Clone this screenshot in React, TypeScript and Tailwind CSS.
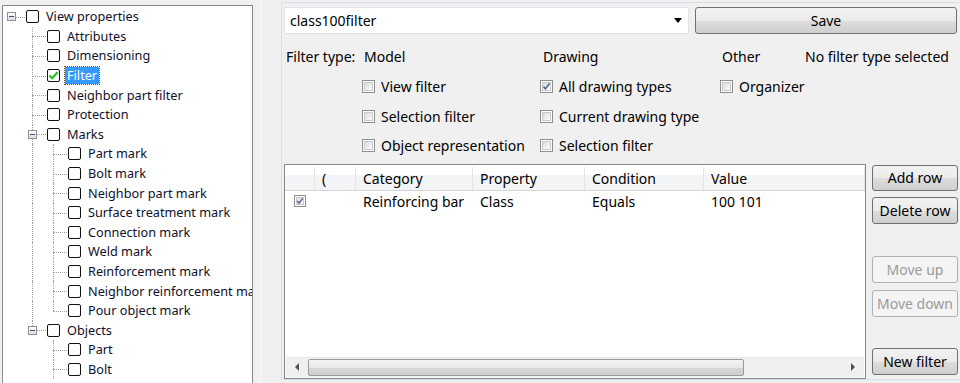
import React from 'react';

type Node = {
    label: string;
    level: number;
    expander?: boolean;
    checked?: boolean;
    selected?: boolean;
    // cells[i] -> what to draw in indent cell i: 'none' | 'pipe' | 'tee' | 'ell' | 'root'
    cells: string[];
};

const treeRows: Node[] = [
    { label: 'View properties', level: 0, expander: true, cells: ['root'] },
    { label: 'Attributes', level: 1, cells: ['none', 'tee'] },
    { label: 'Dimensioning', level: 1, cells: ['none', 'tee'] },
    { label: 'Filter', level: 1, checked: true, selected: true, cells: ['none', 'tee'] },
    { label: 'Neighbor part filter', level: 1, cells: ['none', 'tee'] },
    { label: 'Protection', level: 1, cells: ['none', 'tee'] },
    { label: 'Marks', level: 1, expander: true, cells: ['none', 'tee'] },
    { label: 'Part mark', level: 2, cells: ['none', 'pipe', 'tee'] },
    { label: 'Bolt mark', level: 2, cells: ['none', 'pipe', 'tee'] },
    { label: 'Neighbor part mark', level: 2, cells: ['none', 'pipe', 'tee'] },
    { label: 'Surface treatment mark', level: 2, cells: ['none', 'pipe', 'tee'] },
    { label: 'Connection mark', level: 2, cells: ['none', 'pipe', 'tee'] },
    { label: 'Weld mark', level: 2, cells: ['none', 'pipe', 'tee'] },
    { label: 'Reinforcement mark', level: 2, cells: ['none', 'pipe', 'tee'] },
    { label: 'Neighbor reinforcement mark', level: 2, cells: ['none', 'pipe', 'tee'] },
    { label: 'Pour object mark', level: 2, cells: ['none', 'pipe', 'ell'] },
    { label: 'Objects', level: 1, expander: true, cells: ['none', 'ell'] },
    { label: 'Part', level: 2, cells: ['none', 'none', 'tee'] },
    { label: 'Bolt', level: 2, cells: ['none', 'none', 'tee'] },
];

function Expander() {
    return (
        <div className="relative z-10 w-[9px] h-[9px] border border-[#919191] bg-gradient-to-b from-white to-[#dcdcdc] flex items-center justify-center">
            <div className="w-[5px] h-[1px] bg-[#3b4f7a]" />
        </div>
    );
}

function IndentCell({ kind, first, expander }: { kind: string; first: boolean; expander: boolean }) {
    const w = first ? 'w-[19px]' : 'w-[21px]';
    const lineX = first ? 'left-[8px]' : 'left-[10px]';
    const expX = first ? 'left-[4px]' : 'left-[6px]';
    return (
        <div className={`relative h-full shrink-0 ${w}`}>
            {(kind === 'pipe' || kind === 'tee') && (
                <div className={`absolute top-0 bottom-0 ${lineX} border-l border-dotted border-[#a0a0a0]`} />
            )}
            {kind === 'ell' && (
                <div className={`absolute top-0 h-1/2 ${lineX} border-l border-dotted border-[#a0a0a0]`} />
            )}
            {(kind === 'tee' || kind === 'ell' || kind === 'root') && (
                <div className={`absolute top-1/2 right-[-3px] ${lineX} border-t border-dotted border-[#a0a0a0]`} />
            )}
            {expander && (
                <div className={`absolute top-[5px] ${expX}`}>
                    <Expander />
                </div>
            )}
        </div>
    );
}

function TreeCheck({ checked }: { checked?: boolean }) {
    return (
        <div className="relative z-10 ml-[4px] w-[13px] h-[13px] shrink-0 border-[1.5px] border-[#111] rounded-[2px] bg-white">
            {checked && (
                <svg viewBox="0 0 12 12" className="absolute inset-0 w-full h-full">
                    <polyline points="1.5,6 4.5,9 10.5,2.5" fill="none" stroke="#1fc51f" strokeWidth="2.4" />
                </svg>
            )}
        </div>
    );
}

function Tree() {
    return (
        <div className="ml-[2px] mt-[5px] w-[251px] h-[400px] shrink-0 overflow-hidden bg-white border border-[#828790] text-[12.7px]">
            {treeRows.map((r, i) => (
                <div key={i} className={`flex items-center h-[19.6px] whitespace-nowrap ${i === 0 ? 'mt-[1px]' : ''}`}>
                    {r.cells.map((c, j) => (
                        <IndentCell key={j} kind={c} first={j === 0} expander={!!r.expander && j === r.level} />
                    ))}
                    <TreeCheck checked={r.checked} />
                    <span
                        className={`ml-[5px] px-[2px] leading-[17px] text-[#10102a] ${
                            r.selected ? 'bg-[#3399ff] text-white outline outline-1 outline-dotted outline-[#7a4a20]' : ''
                        }`}
                    >
                        {r.label}
                    </span>
                </div>
            ))}
        </div>
    );
}

function Check({ checked, small }: { checked?: boolean; small?: boolean }) {
    const size = small ? 'w-[12px] h-[12px]' : 'w-[13px] h-[13px]';
    return (
        <div className={`relative shrink-0 ${size} border border-[#8e8f8f] bg-white p-[1px]`}>
            <div className="w-full h-full border border-[#c9c9c9] bg-gradient-to-br from-[#dcdcdc] to-[#fbfbfb]" />
            {checked && (
                <svg viewBox="0 0 13 13" className="absolute inset-0 w-full h-full">
                    <polyline points="3,6.5 5.3,9.3 10,3" fill="none" stroke="#4a5f97" strokeWidth="1.8" />
                </svg>
            )}
        </div>
    );
}

function Opt({ label, checked }: { label: string; checked?: boolean }) {
    return (
        <div className="flex items-center h-[29.5px]">
            <Check checked={checked} />
            <span className="ml-[6px]">{label}</span>
        </div>
    );
}

function Btn({ label, disabled, className = '' }: { label: string; disabled?: boolean; className?: string }) {
    return (
        <div
            className={`flex items-center justify-center rounded-[3px] border ${
                disabled
                    ? 'border-[#adb2b5] bg-[#f4f4f4] text-[#9a9a9a]'
                    : 'border-[#707070] bg-[linear-gradient(#f2f2f2_0%,#ebebeb_50%,#dddddd_51%,#cfcfcf_100%)] text-black'
            } ${className}`}
        >
            {label}
        </div>
    );
}

function FilterTable() {
    const cols = ['w-[30px] pl-[9px]', 'w-[41px] pl-[7px]', 'w-[117px] pl-[7px]', 'w-[112px] pl-[7px]', 'w-[119px] pl-[7px]', 'flex-1 pl-[7px]'];
    const head = ['', '(', 'Category', 'Property', 'Condition', 'Value'];
    const row = ['', '', 'Reinforcing bar', 'Class', 'Equals', '100 101'];
    return (
        <div className="w-[582px] h-[215px] border border-[#828790] bg-white flex flex-col">
            <div className="flex h-[26px] pt-[2px] border-b border-[#d5d5d5] bg-[linear-gradient(#ffffff_0%,#ffffff_40%,#f3f4f5_41%,#f3f4f5_100%)]">
                {head.map((h, i) => (
                    <div key={i} className={`${cols[i]} shrink-0 flex items-center border-r border-[#e3e4e6]`}>
                        {h}
                    </div>
                ))}
            </div>
            <div className="flex h-[21px]">
                {row.map((c, i) => (
                    <div key={i} className={`${cols[i]} shrink-0 flex items-center`}>
                        {i === 0 ? <Check checked small /> : c}
                    </div>
                ))}
            </div>
            <div className="flex-1" />
            <div className="flex h-[20px] mx-[1px] mb-[1px] bg-[#f0f0f0] border-t border-[#e6e6e6] items-center">
                <div className="w-[22px] flex justify-center">
                    <div className="w-0 h-0 border-y-[4px] border-y-transparent border-r-[4px] border-r-[#505050]" />
                </div>
                <div className="w-[436px] h-[17px] rounded-[2px] border border-[#9a9a9a] bg-[linear-gradient(#f3f3f3_0%,#e8e8e8_50%,#d6d6d6_51%,#cfcfcf_100%)]" />
                <div className="flex-1" />
                <div className="w-[22px] flex justify-center">
                    <div className="w-0 h-0 border-y-[4px] border-y-transparent border-l-[4px] border-l-[#505050]" />
                </div>
            </div>
        </div>
    );
}

export default function App() {
    return (
        <div
            className="w-[960px] h-[383px] overflow-hidden bg-[#f0f0f0] flex text-[14px] text-black"
            style={{ fontFamily: '"Noto Sans", "Open Sans", sans-serif' }}
        >
            <Tree />
            <div className="w-[7px] shrink-0" />
            <div className="w-[1px] shrink-0 bg-[#fbfbfb]" />
            <div className="w-[20px] shrink-0" />
            <div className="flex-1 mt-[2px] h-[378px] border-l border-b border-t border-[#d5dfe5] pl-[2px] pt-[4px]">
                <div className="flex items-center gap-[6px]">
                    <div className="w-[405px] h-[27px] bg-white border border-[#e0e3e8] flex items-center pl-[5px] pr-[6px]">
                        <span className="flex-1">class100filter</span>
                        <div className="w-0 h-0 border-x-[4px] border-x-transparent border-t-[5px] border-t-black" />
                    </div>
                    <Btn label="Save" className="w-[262px] h-[27px]" />
                </div>
                <div className="flex mt-[12px] ml-[2px]">
                    <div className="w-[76px] h-[20px] flex items-center">Filter type:</div>
                    <div className="w-[178px]">
                        <div className="h-[20px] flex items-center pl-[2px]">Model</div>
                        <div className="mt-[6px]">
                            <Opt label="View filter" />
                            <Opt label="Selection filter" />
                            <Opt label="Object representation" />
                        </div>
                    </div>
                    <div className="w-[180px]">
                        <div className="h-[20px] flex items-center pl-[3px]">Drawing</div>
                        <div className="mt-[6px]">
                            <Opt label="All drawing types" checked />
                            <Opt label="Current drawing type" />
                            <Opt label="Selection filter" />
                        </div>
                    </div>
                    <div className="w-[85px]">
                        <div className="h-[20px] flex items-center pl-[2px]">Other</div>
                        <div className="mt-[6px]">
                            <Opt label="Organizer" />
                        </div>
                    </div>
                    <div className="h-[20px] flex items-center">No filter type selected</div>
                </div>
                <div className="flex mt-[3px] gap-[6px]">
                    <FilterTable />
                    <div className="w-[86px] flex flex-col pt-[1px]">
                        <Btn label="Add row" className="h-[26px]" />
                        <Btn label="Delete row" className="h-[27px] mt-[6px]" />
                        <Btn label="Move up" disabled className="h-[27px] mt-[32px]" />
                        <Btn label="Move down" disabled className="h-[27px] mt-[7px]" />
                        <Btn label="New filter" className="h-[27px] mt-[31px]" />
                    </div>
                </div>
            </div>
        </div>
    );
}
